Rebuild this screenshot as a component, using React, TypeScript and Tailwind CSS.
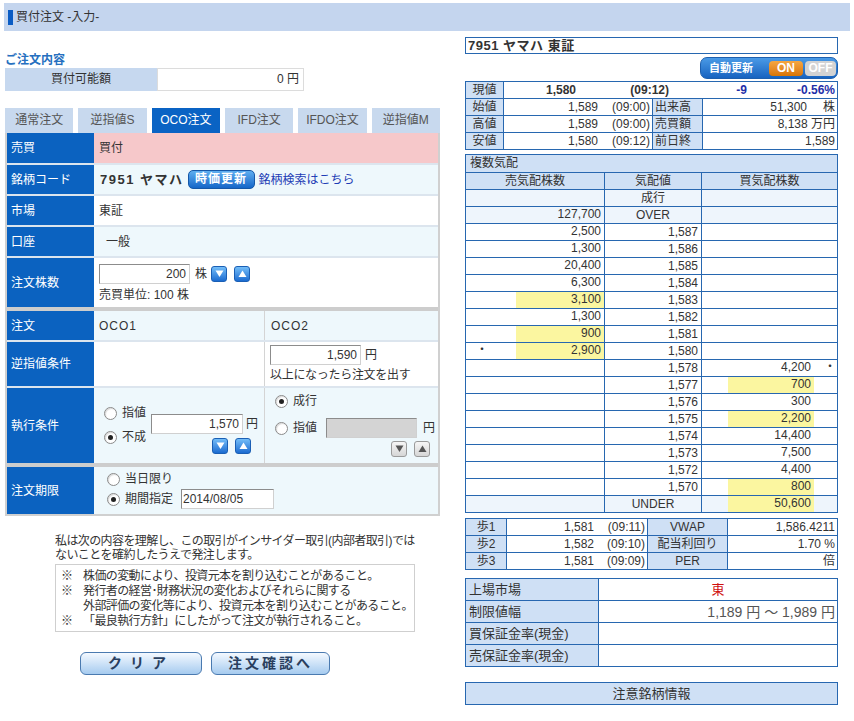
import React from "react";

const bd = "border border-[#2767b0]";
const lb = "bg-[#cfe0f5]";

function Radio({ checked, label }: { checked?: boolean; label: string }) {
  return (
    <div className="flex items-center h-[16px]">
      <span className="w-[13px] h-[13px] rounded-full border border-[#8a8a8a] bg-white flex items-center justify-center shadow-[inset_1px_1px_1px_rgba(0,0,0,0.15)]">
        {checked && <span className="w-[5px] h-[5px] rounded-full bg-[#222]" />}
      </span>
      <span className="ml-[5px] leading-[16px]">{label}</span>
    </div>
  );
}

function Spin({ up, gray }: { up?: boolean; gray?: boolean }) {
  const d = up ? "M4.5 0.5 L8.5 7 L0.5 7Z" : "M0.5 0.5 L8.5 0.5 L4.5 7Z";
  return (
    <span
      className={
        gray
          ? "w-[16px] h-[16px] rounded-[3px] border border-[#9a9a9a] bg-linear-to-b from-[#f6f6f6] to-[#d6d6d6] flex items-center justify-center"
          : "w-[16px] h-[16px] rounded-[3px] border border-[#1a5fb5] bg-linear-to-b from-[#73bdf8] to-[#1a6bd0] flex items-center justify-center"
      }
    >
      <svg width="9" height="8" viewBox="0 0 9 8">
        <path d={d} fill={gray ? "#555" : "#fff"} />
      </svg>
    </span>
  );
}

function Box({ value, w, left, gray }: { value: string; w: string; left?: boolean; gray?: boolean }) {
  return (
    <div
      className={`${w} h-[20px] border border-[#8c8c8c] border-r-[#d0d0d0] border-b-[#d0d0d0] leading-[18px] text-[12px] ${
        left ? "text-left pl-[1px]" : "text-right pr-[3px]"
      } ${gray ? "bg-[#d4d4d4]" : "bg-white"}`}
    >
      {value}
    </div>
  );
}

function Label({ children }: { children: React.ReactNode }) {
  return (
    <div className="w-[87px] shrink-0 bg-[#0b62c0] text-white pl-[4px] flex items-center">{children}</div>
  );
}

const book = [
  { s: "", p: "成行", b: "", lt: true },
  { s: "127,700", p: "OVER", b: "", lt: true },
  { s: "2,500", p: "1,587", b: "" },
  { s: "1,300", p: "1,586", b: "" },
  { s: "20,400", p: "1,585", b: "" },
  { s: "6,300", p: "1,584", b: "" },
  { s: "3,100", p: "1,583", b: "", sy: true },
  { s: "1,300", p: "1,582", b: "" },
  { s: "900", p: "1,581", b: "", sy: true },
  { s: "2,900", p: "1,580", b: "", sy: true, sd: true },
  { s: "", p: "1,578", b: "4,200", bd: true },
  { s: "", p: "1,577", b: "700", by: true },
  { s: "", p: "1,576", b: "300" },
  { s: "", p: "1,575", b: "2,200", by: true },
  { s: "", p: "1,574", b: "14,400" },
  { s: "", p: "1,573", b: "7,500" },
  { s: "", p: "1,572", b: "4,400" },
  { s: "", p: "1,570", b: "800", by: true },
  { s: "", p: "UNDER", b: "50,600", by: true, lt: true },
];

export default function App() {
  return (
    <div className="w-[854px] h-[721px] overflow-hidden bg-white text-[#333] text-[12px] font-['Liberation_Sans','Noto_Sans_CJK_JP',sans-serif]">
      <div className="mt-[3px] mx-[4px] h-[28px] bg-[#c4d5ee] flex items-center">
        <span className="ml-[4px] w-[5px] h-[15px] bg-[#0a5cc4]" />
        <span className="ml-[3px] text-[12px] leading-[14px]">買付注文 -入力-</span>
      </div>

      <div className="flex px-[5px] mt-[6px]">
        {/* left */}
        <div className="w-[435px] shrink-0">
          <div className="pt-[16px] text-[#2670c0] font-bold leading-[15px]">ご注文内容</div>
          <div className="flex">
            <div className="w-[152px] h-[23px] bg-[#c6d8ef] text-center leading-[23px]">買付可能額</div>
            <div className="w-[147px] h-[23px] border border-[#dcdcdc] text-right pr-[4px] leading-[21px]">0 円</div>
          </div>

          <div className="grid grid-cols-6 gap-[5px] mt-[17px] h-[25px]">
            {["通常注文", "逆指値S", "OCO注文", "IFD注文", "IFDO注文", "逆指値M"].map((t) => (
              <div
                key={t}
                className={
                  t === "OCO注文"
                    ? "bg-[#0a63c4] text-white text-center leading-[25px]"
                    : "bg-[#c8d9ee] text-[#555] text-center leading-[25px]"
                }
              >
                {t}
              </div>
            ))}
          </div>

          <div className="border-x-2 border-b-2 border-[#d0d0d0]">
            <div className="flex h-[32px] border-b-2 border-[#dce5ee]">
              <Label>売買</Label>
              <div className="flex-1 bg-[#f6c8ca] pl-[5px] flex items-center">買付</div>
            </div>
            <div className="flex h-[31px] border-b-2 border-[#dce5ee]">
              <Label>銘柄コード</Label>
              <div className="flex-1 bg-[#eef8fc] pl-[6px] flex items-center">
                <span className="font-bold text-[13px] tracking-[1.5px]">7951 ヤマハ</span>
                <span className="ml-[4px] h-[19px] w-[67px] rounded-[5px] border border-[#1558a8] bg-linear-to-b from-[#5eaef0] to-[#1466c8] text-white font-bold text-center leading-[17px] tracking-[1px]">
                  時価更新
                </span>
                <span className="ml-[4px] text-[#1e3db5]">銘柄検索はこちら</span>
              </div>
            </div>
            <div className="flex h-[31px] border-b-2 border-[#dce5ee]">
              <Label>市場</Label>
              <div className="flex-1 bg-white pl-[5px] flex items-center">東証</div>
            </div>
            <div className="flex h-[31px] border-b-2 border-[#dce5ee]">
              <Label>口座</Label>
              <div className="flex-1 bg-[#eef8fc] pl-[12px] flex items-center">一般</div>
            </div>
            <div className="flex h-[49px]">
              <Label>注文株数</Label>
              <div className="flex-1 bg-white pl-[5px] pt-[6px]">
                <div className="flex items-center">
                  <Box value="200" w="w-[91px]" />
                  <span className="ml-[5px]">株</span>
                  <span className="ml-[4px] flex gap-[7px]">
                    <Spin />
                    <Spin up />
                  </span>
                </div>
                <div className="mt-[4px] leading-[14px]">売買単位: 100 株</div>
              </div>
            </div>
            <div className="h-[4px] bg-[#cdcdcd]" />
            <div className="flex h-[31px] border-b-2 border-[#dce5ee]">
              <Label>注文</Label>
              <div className="w-[171px] bg-[#eef8fc] border-r border-[#d4d4d4] pl-[5px] flex items-center tracking-[1px]">OCO1</div>
              <div className="flex-1 bg-[#eef8fc] pl-[6px] flex items-center tracking-[1px]">OCO2</div>
            </div>
            <div className="flex h-[46px] border-b-2 border-[#dce5ee]">
              <Label>逆指値条件</Label>
              <div className="w-[171px] bg-white border-r border-[#d4d4d4]" />
              <div className="flex-1 bg-white pl-[5px] pt-[3px]">
                <div className="flex items-center">
                  <Box value="1,590" w="w-[91px]" />
                  <span className="ml-[4px]">円</span>
                </div>
                <div className="mt-[3px] leading-[14px] tracking-[-0.3px]">以上になったら注文を出す</div>
              </div>
            </div>
            <div className="flex h-[75px]">
              <Label>執行条件</Label>
              <div className="w-[171px] bg-[#eef8fc] border-r border-[#d4d4d4] pl-[10px] pt-[17px] flex">
                <div className="flex flex-col gap-[8px]">
                  <Radio label="指値" />
                  <Radio checked label="不成" />
                </div>
                <div className="ml-[5px] pt-[9px]">
                  <div className="flex items-center">
                    <Box value="1,570" w="w-[92px]" />
                    <span className="ml-[3px]">円</span>
                  </div>
                  <div className="flex gap-[7px] mt-[4px] ml-[61px]">
                    <Spin />
                    <Spin up />
                  </div>
                </div>
              </div>
              <div className="flex-1 bg-[#eef8fc] pl-[10px] pt-[5px]">
                <Radio checked label="成行" />
                <div className="flex items-center mt-[9px]">
                  <Radio label="指値" />
                  <span className="ml-[9px]">
                    <Box value="" w="w-[91px]" gray />
                  </span>
                  <span className="ml-[6px]">円</span>
                </div>
                <div className="flex gap-[7px] mt-[3px] ml-[116px]">
                  <Spin gray />
                  <Spin gray up />
                </div>
              </div>
            </div>
            <div className="h-[4px] bg-[#cdcdcd]" />
            <div className="flex h-[47px]">
              <Label>注文期限</Label>
              <div className="flex-1 bg-[#eef8fc] pl-[13px] pt-[4px]">
                <Radio label="当日限り" />
                <div className="flex items-center mt-[2px]">
                  <Radio checked label="期間指定" />
                  <span className="ml-[8px]">
                    <Box value="2014/08/05" w="w-[93px]" left />
                  </span>
                </div>
              </div>
            </div>
          </div>

          <div className="pl-[50px] mt-[18px] tracking-[-0.6px]">
            <div className="leading-[14px] w-[370px]">
              私は次の内容を理解し、この取引がインサイダー取引(内部者取引)では
              <br />
              ないことを確約したうえで発注します。
            </div>
            <div className="mt-[2px] w-[360px] h-[68px] border border-[#cfcfcf] pl-[5px] pt-[4px] leading-[15px]">
              <div className="flex"><span className="w-[22px]">※</span>株価の変動により、投資元本を割り込むことがあること。</div>
              <div className="flex"><span className="w-[22px]">※</span>発行者の経営･財務状況の変化およびそれらに関する</div>
              <div className="flex"><span className="w-[22px]" />外部評価の変化等により、投資元本を割り込むことがあること。</div>
              <div className="flex"><span className="w-[22px]">※</span>「最良執行方針」にしたがって注文が執行されること。</div>
            </div>
          </div>

          <div className="flex ml-[75px] mt-[20px] gap-[9px]">
            <div className="w-[122px] h-[23px] rounded-[6px] border border-[#4a7ab0] bg-linear-to-b from-[#f4f9ff] to-[#a6cbef] text-center font-bold text-[14px] leading-[21px] text-[#2a3f5f] tracking-[8px]">
              クリア
            </div>
            <div className="w-[119px] h-[23px] rounded-[6px] border border-[#4a7ab0] bg-linear-to-b from-[#f4f9ff] to-[#a6cbef] text-center font-bold text-[14px] leading-[21px] text-[#2a3f5f] tracking-[3px]">
              注文確認へ
            </div>
          </div>
        </div>

        {/* right */}
        <div className="w-[373px] ml-[25px] shrink-0">
          <div className={`h-[17px] ${bd} pl-[2px] font-bold text-[13px] leading-[15px] tracking-[0.5px]`}>7951 ヤマハ 東証</div>
          <div className="flex justify-end mt-[3px]">
            <div className="w-[138px] h-[22px] rounded-[7px] border border-[#1d5fae] bg-linear-to-b from-[#4a9ae6] to-[#1763c0] flex items-center pl-[8px]">
              <span className="text-white font-bold text-[11px] leading-[12px]">自動更新</span>
              <span className="ml-[16px] w-[34px] h-[15px] rounded-[4px] bg-linear-to-b from-[#f5a640] to-[#d97500] text-white font-bold text-[12px] leading-[15px] text-center">ON</span>
              <span className="ml-[2px] w-[31px] h-[15px] rounded-[4px] bg-[#d3d3d3] text-white font-bold text-[12px] leading-[15px] text-center">OFF</span>
            </div>
          </div>

          <table className={`mt-[2px] w-full table-fixed border-collapse ${bd} leading-[15px]`}>
            <colgroup>
              <col className="w-[38px]" />
              <col className="w-[149px]" />
              <col className="w-[50px]" />
              <col />
            </colgroup>
            <tbody>
              <tr className="h-[17px]">
                <td className={`${bd} ${lb} text-center p-0`}>現値</td>
                <td colSpan={3} className={`${bd} p-0 font-bold`}>
                  <div className="flex">
                    <span className="w-[72px] text-right">1,580</span>
                    <span className="w-[93px] text-right">(09:12)</span>
                    <span className="w-[78px] text-right text-[#1f2fa8]">-9</span>
                    <span className="flex-1 text-right pr-[2px] text-[#1f2fa8]">-0.56%</span>
                  </div>
                </td>
              </tr>
              {[
                ["始値", "1,589", "(09:00)", "出来高", "51,300", "株"],
                ["高値", "1,589", "(09:00)", "売買額", "8,138 万円", ""],
                ["安値", "1,580", "(09:12)", "前日終", "1,589", ""],
              ].map((r) => (
                <tr key={r[0]} className="h-[17px]">
                  <td className={`${bd} ${lb} text-center p-0`}>{r[0]}</td>
                  <td className={`${bd} p-0`}>
                    <div className="flex">
                      <span className="w-[94px] text-right">{r[1]}</span>
                      <span className="ml-auto pr-[2px]">{r[2]}</span>
                    </div>
                  </td>
                  <td className={`${bd} ${lb} pl-[2px] p-0`}>{r[3]}</td>
                  <td className={`${bd} p-0 text-right pr-[2px]`}>
                    {r[4]}
                    {r[5] && <span className="ml-[16px]">{r[5]}</span>}
                  </td>
                </tr>
              ))}
            </tbody>
          </table>

          <table className={`mt-[4px] w-full table-fixed border-collapse ${bd} leading-[15px]`}>
            <colgroup>
              <col className="w-[139px]" />
              <col className="w-[97px]" />
              <col />
            </colgroup>
            <tbody>
              <tr className="h-[18px]">
                <td colSpan={3} className={`${bd} ${lb} pl-[4px] p-0`}>複数気配</td>
              </tr>
              <tr className="h-[17px]">
                <td className={`${bd} ${lb} text-center p-0`}>売気配株数</td>
                <td className={`${bd} ${lb} text-center p-0`}>気配値</td>
                <td className={`${bd} ${lb} text-center p-0`}>買気配株数</td>
              </tr>
              {book.map((r, i) => (
                <tr key={i} className={r.lt ? "h-[17px] bg-[#eef5fc]" : "h-[17px] bg-white"}>
                  <td className={`${bd} p-0`}>
                    <div className="flex h-[16px]">
                      <span className="w-[50px] pl-[10px]">{r.sd ? "・" : ""}</span>
                      <span className={`flex-1 text-right pr-[3px] ${r.sy ? "bg-[#fbf6a0]" : ""}`}>{r.s}</span>
                    </div>
                  </td>
                  <td className={`${bd} p-0 ${/\d/.test(r.p) ? "text-right pr-[3px]" : "text-center"}`}>{r.p}</td>
                  <td className={`${bd} p-0`}>
                    <div className="flex h-[16px]">
                      <span className="w-[26px]" />
                      <span className={`w-[86px] text-right pr-[3px] ${r.by ? "bg-[#fbf6a0]" : ""}`}>{r.b}</span>
                      <span className="flex-1 pl-[10px]">{r.bd ? "・" : ""}</span>
                    </div>
                  </td>
                </tr>
              ))}
            </tbody>
          </table>

          <table className={`mt-[5px] w-full table-fixed border-collapse ${bd} leading-[15px]`}>
            <colgroup>
              <col className="w-[41px]" />
              <col className="w-[141px]" />
              <col className="w-[80px]" />
              <col />
            </colgroup>
            <tbody>
              {[
                ["歩1", "1,581", "(09:11)", "VWAP", "1,586.4211"],
                ["歩2", "1,582", "(09:10)", "配当利回り", "1.70 %"],
                ["歩3", "1,581", "(09:09)", "PER", "倍"],
              ].map((r) => (
                <tr key={r[0]} className="h-[17px]">
                  <td className={`${bd} ${lb} text-center p-0`}>{r[0]}</td>
                  <td className={`${bd} p-0`}>
                    <div className="flex">
                      <span className="w-[87px] text-right">{r[1]}</span>
                      <span className="ml-auto pr-[2px]">{r[2]}</span>
                    </div>
                  </td>
                  <td className={`${bd} ${lb} text-center p-0`}>{r[3]}</td>
                  <td className={`${bd} p-0 text-right pr-[2px]`}>{r[4]}</td>
                </tr>
              ))}
            </tbody>
          </table>

          <table className={`mt-[8px] w-full table-fixed border-collapse ${bd} text-[13px] leading-[16px]`}>
            <colgroup>
              <col className="w-[133px]" />
              <col />
            </colgroup>
            <tbody>
              <tr className="h-[22px]">
                <td className={`${bd} ${lb} pl-[3px] p-0`}>上場市場</td>
                <td className={`${bd} p-0 text-center text-[#d01010]`}>東</td>
              </tr>
              <tr className="h-[22px]">
                <td className={`${bd} ${lb} pl-[3px] p-0`}>制限値幅</td>
                <td className={`${bd} p-0 text-right pr-[2px] text-[14px] text-[#555]`}>1,189 円 ～ 1,989 円</td>
              </tr>
              <tr className="h-[22px]">
                <td className={`${bd} ${lb} pl-[3px] p-0`}>買保証金率(現金)</td>
                <td className={`${bd} p-0`} />
              </tr>
              <tr className="h-[22px]">
                <td className={`${bd} ${lb} pl-[3px] p-0`}>売保証金率(現金)</td>
                <td className={`${bd} p-0`} />
              </tr>
            </tbody>
          </table>

          <div className={`mt-[15px] h-[23px] ${bd} ${lb} text-center text-[13px] leading-[21px]`}>注意銘柄情報</div>
        </div>
      </div>
    </div>
  );
}
